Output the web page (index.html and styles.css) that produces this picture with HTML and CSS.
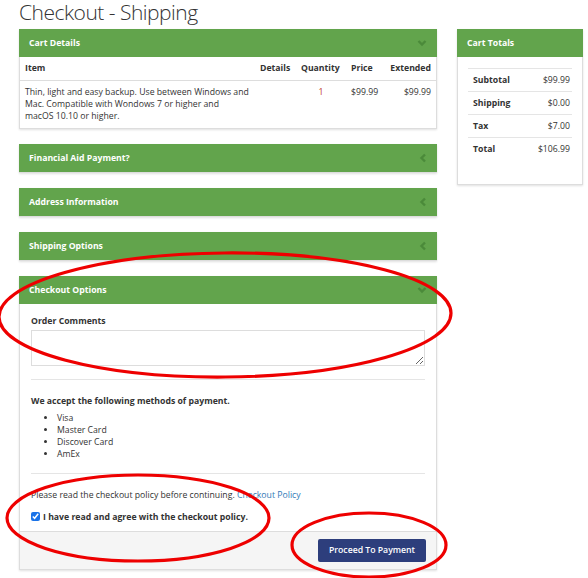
FILE: index.html
```html
<!DOCTYPE html>
<html lang="en">
<head>
<meta charset="utf-8">
<title>Checkout - Shipping</title>
<link rel="stylesheet" href="styles.css">
</head>
<body>
<div class="page">
  <h1 class="title">Checkout - Shipping</h1>
  <div class="layout">
    <div class="main">
      <section class="panel">
        <div class="panel-head">
          <span>Cart Details</span>
          <svg class="chev" width="10" height="8" viewBox="0 0 10 8"><polyline points="1.5,2 5,5.5 8.5,2" fill="none" stroke="#4b8a3a" stroke-width="2.4"/></svg>
        </div>
        <table class="cart">
          <colgroup>
            <col class="w-item"><col class="w-det"><col class="w-qty"><col class="w-price"><col class="w-ext">
          </colgroup>
          <thead>
            <tr><th class="c-item">Item</th><th>Details</th><th>Quantity</th><th>Price</th><th class="c-ext">Extended</th></tr>
          </thead>
          <tbody>
            <tr><td class="c-item">Thin, light and easy backup. Use between Windows and Mac. Compatible with Wondows 7 or higher and macOS 10.10 or higher.</td><td></td><td class="qty">1</td><td>$99.99</td><td class="c-ext">$99.99</td></tr>
          </tbody>
        </table>
      </section>

      <section class="panel">
        <div class="panel-head">
          <span>Financial Aid Payment?</span>
          <svg class="chev" width="8" height="10" viewBox="0 0 8 10"><polyline points="6,1.5 2.5,5 6,8.5" fill="none" stroke="#4b8a3a" stroke-width="2.4"/></svg>
        </div>
      </section>
      <section class="panel">
        <div class="panel-head">
          <span>Address Information</span>
          <svg class="chev" width="8" height="10" viewBox="0 0 8 10"><polyline points="6,1.5 2.5,5 6,8.5" fill="none" stroke="#4b8a3a" stroke-width="2.4"/></svg>
        </div>
      </section>
      <section class="panel">
        <div class="panel-head">
          <span>Shipping Options</span>
          <svg class="chev" width="8" height="10" viewBox="0 0 8 10"><polyline points="6,1.5 2.5,5 6,8.5" fill="none" stroke="#4b8a3a" stroke-width="2.4"/></svg>
        </div>
      </section>

      <section class="panel">
        <div class="panel-head">
          <span>Checkout Options</span>
          <svg class="chev" width="10" height="8" viewBox="0 0 10 8"><polyline points="1.5,2 5,5.5 8.5,2" fill="none" stroke="#4b8a3a" stroke-width="2.4"/></svg>
        </div>
        <div class="panel-body">
          <label class="lbl" for="comments">Order Comments</label>
          <textarea id="comments" class="comments"></textarea>
          <hr class="rule">
          <p class="strong">We accept the following methods of payment.</p>
          <ul class="methods">
            <li>Visa</li>
            <li>Master Card</li>
            <li>Discover Card</li>
            <li>AmEx</li>
          </ul>
          <hr class="rule">
          <p class="policy">Please read the checkout policy before continuing. <a href="#">Checkout Policy</a></p>
          <label class="agree"><input type="checkbox" checked> I have read and agree with the checkout policy.</label>
        </div>
        <div class="panel-foot">
          <button class="btn" type="button">Proceed To Payment</button>
        </div>
      </section>
    </div>

    <aside class="side">
      <section class="panel totals-panel">
        <div class="panel-head"><span>Cart Totals</span></div>
        <table class="totals">
          <tr><th>Subtotal</th><td>$99.99</td></tr>
          <tr><th>Shipping</th><td>$0.00</td></tr>
          <tr><th>Tax</th><td>$7.00</td></tr>
          <tr><th>Total</th><td>$106.99</td></tr>
        </table>
      </section>
    </aside>
  </div>
</div>

<svg class="marks" width="588" height="578" viewBox="0 0 588 578">
  <ellipse cx="225" cy="315" rx="226" ry="62" transform="rotate(-0.5 225 315)" fill="none" stroke="#ee0000" stroke-width="3.2"/>
  <ellipse cx="138" cy="518" rx="131" ry="43" fill="none" stroke="#ee0000" stroke-width="3.2"/>
  <ellipse cx="369" cy="545" rx="77" ry="32" fill="none" stroke="#ee0000" stroke-width="3.2"/>
</svg>
</body>
</html>
```

FILE: styles.css
```css
* { box-sizing: border-box; }
html, body { margin: 0; padding: 0; background: #fff; }
body {
  font-family: "Open Sans", "Noto Sans", sans-serif;
  font-size: 8.7px;
  line-height: 12px;
  color: #333;
}
.page { padding: 0 5px 0 19px; }
.title {
  margin: 0;
  font-size: 21px;
  line-height: 24px;
  font-weight: 300;
  letter-spacing: -0.5px;
  color: #333;
  height: 29px;
}
.layout {
  display: grid;
  grid-template-columns: 418px 126px;
  column-gap: 20px;
  align-items: start;
}
.panel {
  border: 1px solid #ddd;
  background: #fff;
  box-shadow: 0 1px 2px rgba(0,0,0,0.12);
  margin-bottom: 15px;
}
.panel-head {
  background: #62a44c;
  color: #fff;
  font-weight: 700;
  height: 28px;
  display: flex;
  align-items: center;
  justify-content: space-between;
  padding: 0 10px 0 10px;
  margin: -1px -1px 0 -1px;
}
.chev { display: block; }

.cart { width: 100%; border-collapse: collapse; table-layout: fixed; }
.w-item { width: 235px; }
.w-det { width: 41px; }
.w-qty { width: 50px; }
.w-price { width: 38px; }
.w-ext { width: 52px; }
.cart th, .cart td { padding: 0 5px; text-align: left; vertical-align: top; white-space: nowrap; }
.cart th.c-item, .cart td.c-item { white-space: normal; padding-right: 6px; }
.cart thead th { height: 23px; vertical-align: middle; border-bottom: 1px solid #ddd; font-weight: 700; }
.cart tbody td { padding-top: 5px; padding-bottom: 6px; }
.cart .c-ext { text-align: right; }
.cart td.qty { text-align: center; color: #c0392b; }

.panel-body { padding: 11px 11px 8px 11px; }
.lbl { display: block; font-weight: 700; margin-bottom: 3px; }
.comments {
  display: block;
  width: 100%;
  height: 36px;
  border: 1px solid #ddd;
  margin: 0;
  font: inherit;
}
.rule { border: 0; border-top: 1px solid #e5e5e5; margin: 13px 0 15px; height: 0; }
.strong { font-weight: 700; margin: 0 0 5px; }
.methods { margin: 0; padding-left: 26px; }
.policy { margin: 0 0 10px; }
.policy a { color: #337ab7; text-decoration: none; }
.agree { display: flex; align-items: center; font-weight: 700; }
.agree input { width: 9px; height: 9px; margin: 0 3px 0 0; accent-color: #1a73e8; }
.panel-foot {
  background: #f5f5f5;
  border-top: 1px solid #ddd;
  padding: 7px 10px 7px;
  display: flex;
  justify-content: flex-end;
}
.btn {
  background: #2d3e7c;
  color: #fff;
  border: 0;
  border-radius: 2px;
  font: inherit;
  font-weight: 600;
  height: 23px;
  width: 108px;
  padding: 0;
}

.totals-panel { padding-bottom: 23px; }
.totals { width: 104px; margin: 11px 10px 0; border-collapse: collapse; }
.totals th, .totals td { height: 23px; border-top: 1px solid #e5e5e5; padding: 0 2px; vertical-align: middle; }
.totals th { text-align: left; font-weight: 700; padding-left: 5px; }
.totals td { text-align: right; }

.marks { position: absolute; left: 0; top: 0; pointer-events: none; }
```
